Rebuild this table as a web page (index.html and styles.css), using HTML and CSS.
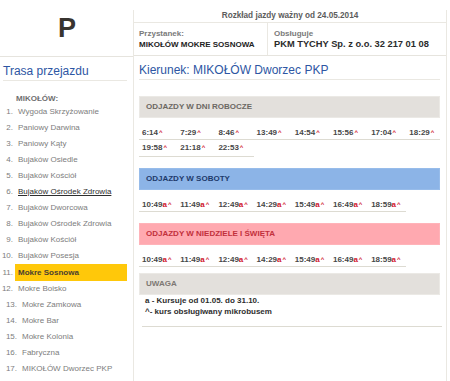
FILE: index.html
```html
<!DOCTYPE html>
<html lang="pl">
<head>
<meta charset="utf-8">
<title>Rozkład jazdy</title>
<link rel="stylesheet" href="styles.css">
</head>
<body>
<div class="page">
  <aside class="side">
    <div class="logo">P</div>
    <h2 class="title side-title">Trasa przejazdu</h2>
    <div class="town">MIKOŁÓW:</div>
    <ol class="stops">
      <li><span class="num">1.</span><span class="name">Wygoda Skrzyżowanie</span></li>
      <li><span class="num">2.</span><span class="name">Paniowy Darwina</span></li>
      <li><span class="num">3.</span><span class="name">Paniowy Kąty</span></li>
      <li><span class="num">4.</span><span class="name">Bujaków Osiedle</span></li>
      <li><span class="num">5.</span><span class="name">Bujaków Kościół</span></li>
      <li class="hover"><span class="num">6.</span><span class="name">Bujaków Ośrodek Zdrowia</span></li>
      <li><span class="num">7.</span><span class="name">Bujaków Dworcowa</span></li>
      <li><span class="num">8.</span><span class="name">Bujaków Ośrodek Zdrowia</span></li>
      <li><span class="num">9.</span><span class="name">Bujaków Kościół</span></li>
      <li><span class="num">10.</span><span class="name">Bujaków Posesja</span></li>
      <li class="active"><span class="num">11.</span><span class="name">Mokre Sosnowa</span></li>
      <li><span class="num">12.</span><span class="name">Mokre Boisko</span></li>
      <li class="shift"><span class="num">13.</span><span class="name">Mokre Zamkowa</span></li>
      <li class="shift"><span class="num">14.</span><span class="name">Mokre Bar</span></li>
      <li class="shift"><span class="num">15.</span><span class="name">Mokre Kolonia</span></li>
      <li class="shift"><span class="num">16.</span><span class="name">Fabryczna</span></li>
      <li class="shift"><span class="num">17.</span><span class="name">MIKOŁÓW Dworzec PKP</span></li>
    </ol>
  </aside>
  <main class="panel">
    <div class="info">
      <div class="valid">Rozkład jazdy ważny od 24.05.2014</div>
      <div class="info-row">
        <div class="info-cell stop-cell">
          <div class="label">Przystanek:</div>
          <div class="value">MIKOŁÓW MOKRE SOSNOWA</div>
        </div>
        <div class="info-cell">
          <div class="label">Obsługuje</div>
          <div class="value big">PKM TYCHY Sp. z o.o. 32 217 01 08</div>
        </div>
      </div>
    </div>
    <h2 class="title direction">Kierunek: MIKOŁÓW Dworzec PKP</h2>

    <section class="sec first">
      <div class="sec-head grey">ODJAZDY W DNI ROBOCZE</div>
      <div class="times">
        <div class="t">6:14<span class="m">^</span></div>
        <div class="t">7:29<span class="m">^</span></div>
        <div class="t">8:46<span class="m">^</span></div>
        <div class="t">13:49<span class="m">^</span></div>
        <div class="t">14:54<span class="m">^</span></div>
        <div class="t">15:56<span class="m">^</span></div>
        <div class="t">17:04<span class="m">^</span></div>
        <div class="t">18:29<span class="m">^</span></div>
        <div class="t">19:58<span class="m">^</span></div>
        <div class="t">21:18<span class="m">^</span></div>
        <div class="t">22:53<span class="m">^</span></div>
      </div>
    </section>

    <section class="sec">
      <div class="sec-head blue">ODJAZDY W SOBOTY</div>
      <div class="times">
        <div class="t">10:49<span class="a">a</span><span class="m">^</span></div>
        <div class="t">11:49<span class="a">a</span><span class="m">^</span></div>
        <div class="t">12:49<span class="a">a</span><span class="m">^</span></div>
        <div class="t">14:29<span class="a">a</span><span class="m">^</span></div>
        <div class="t">15:49<span class="a">a</span><span class="m">^</span></div>
        <div class="t">16:49<span class="a">a</span><span class="m">^</span></div>
        <div class="t">18:59<span class="a">a</span><span class="m">^</span></div>
      </div>
    </section>

    <section class="sec">
      <div class="sec-head red">ODJAZDY W NIEDZIELE I ŚWIĘTA</div>
      <div class="times">
        <div class="t">10:49<span class="a">a</span><span class="m">^</span></div>
        <div class="t">11:49<span class="a">a</span><span class="m">^</span></div>
        <div class="t">12:49<span class="a">a</span><span class="m">^</span></div>
        <div class="t">14:29<span class="a">a</span><span class="m">^</span></div>
        <div class="t">15:49<span class="a">a</span><span class="m">^</span></div>
        <div class="t">16:49<span class="a">a</span><span class="m">^</span></div>
        <div class="t">18:59<span class="a">a</span><span class="m">^</span></div>
      </div>
    </section>

    <section class="sec note-sec">
      <div class="sec-head grey light">UWAGA</div>
      <div class="note">
        <div>a - Kursuje od 01.05. do 31.10.</div>
        <div>^- kurs obsługiwany mikrobusem</div>
      </div>
    </section>
  </main>
</div>
</body>
</html>
```

FILE: styles.css
```css
html, body {
  margin: 0;
  padding: 0;
  background: #ffffff;
}

body {
  font-family: "Liberation Sans", Arial, sans-serif;
  font-size: 8px;
  color: #333333;
}

.page {
  display: flex;
  align-items: flex-start;
  width: 447px;
}

/* ---------- left column ---------- */
.side {
  width: 133px;
  flex: none;
}

.logo {
  height: 56px;
  line-height: 56px;
  border-bottom: 1px solid #e6e4de;
  text-align: center;
  font-size: 27px;
  font-weight: bold;
  color: #38342f;
  padding-left: 1px;
}

.title {
  margin: 7px 6px 0 3px;
  font-size: 12px;
  font-weight: normal;
  line-height: 15px;
  padding-bottom: 1px;
  border-bottom: 1px solid #eae8e2;
  color: #2d56a3;
  white-space: nowrap;
}

.town {
  margin: 12px 0 0 16px;
  line-height: 11px;
  font-weight: bold;
  color: #6f6f6f;
}

.stops {
  list-style: none;
  margin: 0;
  padding: 0;
}

.stops li {
  display: flex;
  height: 16px;
  line-height: 16px;
  color: #7d7d7d;
  white-space: nowrap;
}

.stops .num {
  width: 13px;
  flex: none;
  text-align: right;
}

.stops .name {
  margin-left: 5px;
}

.stops li.hover .name {
  color: #2e2e2e;
  text-decoration: underline;
}

.stops li.active {
  height: 17px;
}

.stops li.active .num {
  padding-top: 1px;
  line-height: 16px;
}

.stops li.active .name {
  flex: 1;
  margin: 0 6px 0 2px;
  padding: 1px 3px 0;
  background: #ffc80a;
  color: #4a4030;
  font-weight: bold;
}

.stops li.shift {
  padding-left: 4px;
}

/* ---------- right panel ---------- */
.panel {
  width: 312px;
  flex: none;
  margin-top: 10px;
  border-left: 1px solid #eae8e2;
  border-right: 1px solid #eae8e2;
  padding-bottom: 60px;
}

.info {
  border-bottom: 1px solid #e6e4de;
}

.valid {
  height: 12px;
  line-height: 11px;
  text-align: center;
  font-weight: bold;
  color: #5c5c5c;
  font-size: 8.2px;
  border-bottom: 1px solid #eae8e2;
}

.info-row {
  display: flex;
}

.info-cell {
  padding: 5px 6px 5px 6px;
  line-height: 11px;
  white-space: nowrap;
}

.stop-cell {
  width: 122px;
  padding-left: 5px;
  border-right: 1px solid #eae8e2;
}

.label {
  font-weight: bold;
  color: #7a7a7a;
}

.value {
  font-weight: bold;
  color: #222222;
}

.value.big {
  font-size: 9.3px;
  color: #2b2b2b;
}

.direction {
  margin: 7px 6px 0 5px;
}

/* ---------- timetable sections ---------- */
.sec {
  margin: 11px 0 0 5px;
}

.sec.first {
  margin-top: 16px;
}

.sec.note-sec {
  margin-top: 6px;
}

.sec-head {
  margin-right: 6px;
  height: 20px;
  line-height: 20px;
  padding-left: 6px;
  font-weight: bold;
  border: 1px solid transparent;
}

.sec-head.grey {
  background: #e3e0dc;
  border-color: #ebe9e5;
  color: #6c6863;
}

.sec-head.grey.light {
  color: #7d7873;
}

.sec-head.blue {
  background: #8cb4e7;
  border-color: #97bcea;
  color: #1e3a6b;
}

.sec-head.red {
  background: #ffa9b0;
  border-color: #ffb3b9;
  color: #c2303c;
}

.times {
  display: grid;
  grid-template-columns: repeat(8, 38.2px);
  margin: 5px 6px 0 0;
  overflow: hidden;
}

.t {
  height: 11px;
  padding: 4px 0 1px 3px;
  line-height: 11px;
  border-bottom: 1px solid #dddbd2;
  font-weight: bold;
  color: #474747;
  white-space: nowrap;
}

.t:nth-child(n+9) {
  padding-top: 2px;
  padding-bottom: 3px;
}

.a {
  color: #d0142c;
}

.m {
  color: #d0142c;
  font-size: 6px;
  line-height: 0;
  vertical-align: 1px;
  margin-left: 1px;
}

.note {
  margin: 0 4px 0 3px;
  padding: 1px 0 9px 3px;
  line-height: 10.5px;
  font-weight: bold;
  color: #2e2e2e;
  border-bottom: 1px solid #dddbd2;
}
```
